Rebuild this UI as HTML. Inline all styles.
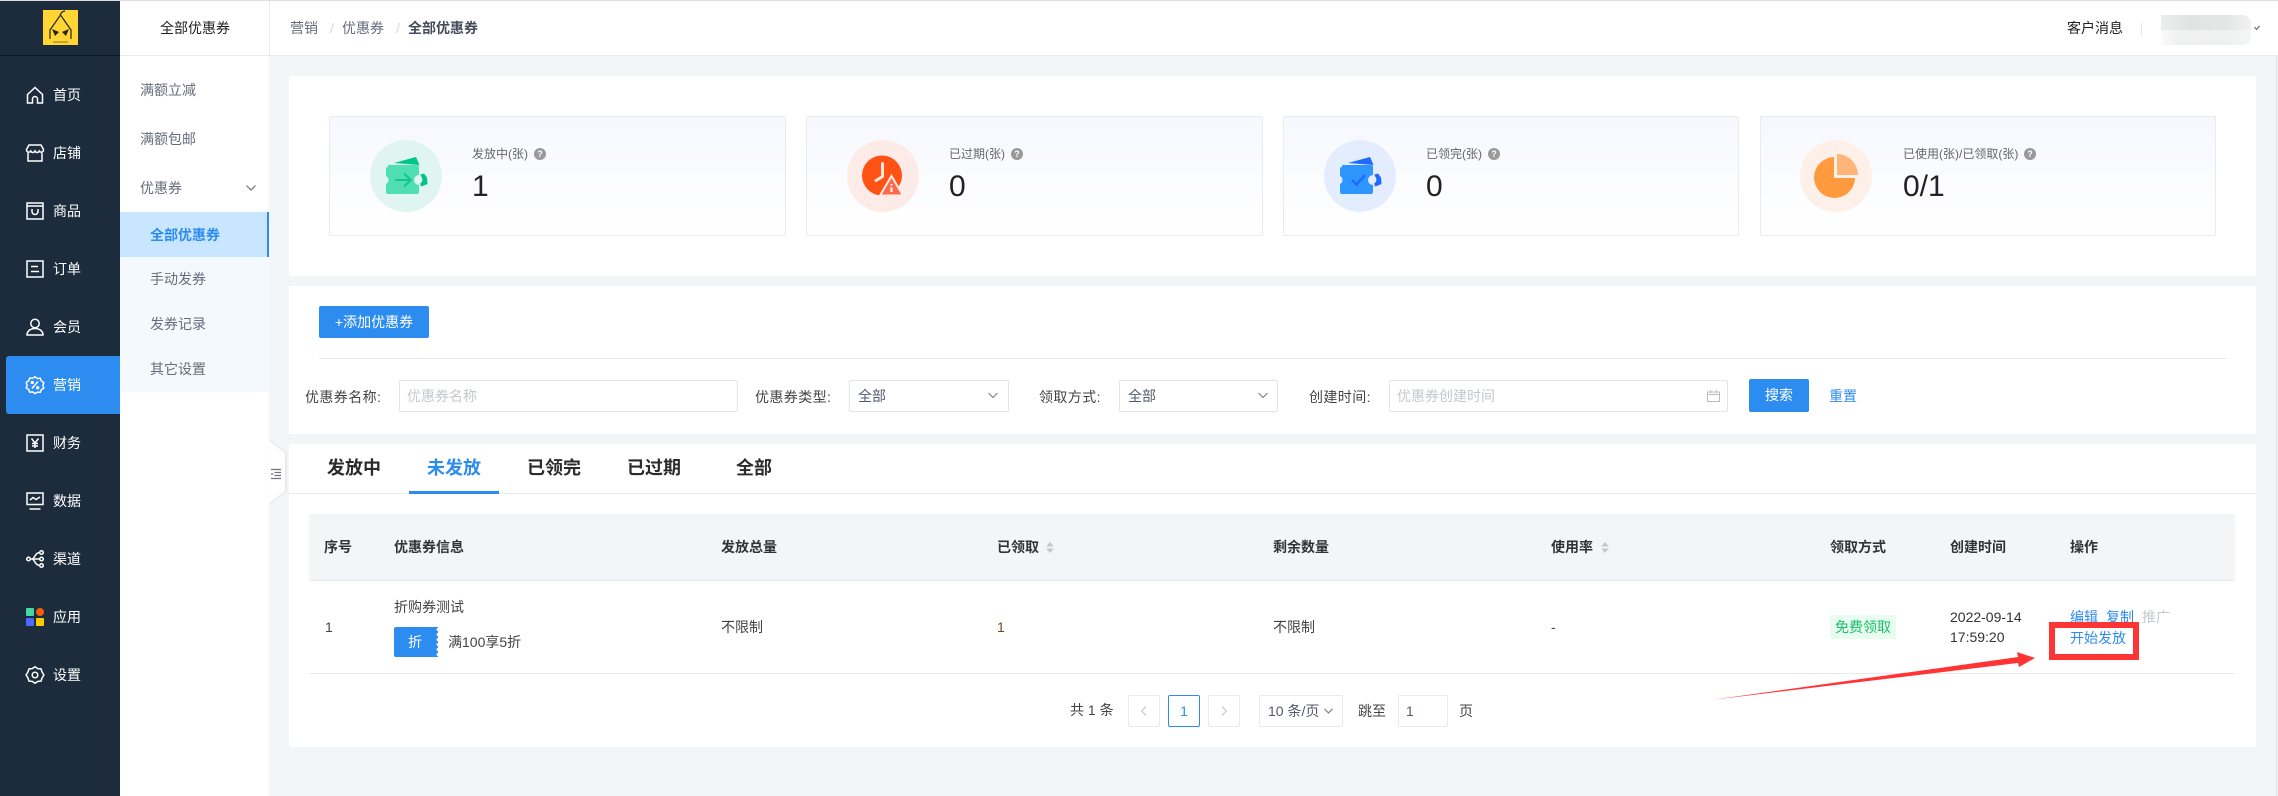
<!DOCTYPE html>
<html lang="zh"><head><meta charset="utf-8"><title>全部优惠券</title>
<style>
*{box-sizing:border-box}
html,body{margin:0;padding:0}
body{width:2278px;height:796px;position:relative;overflow:hidden;background:#f4f5f7;font-family:"Liberation Sans","Noto Sans CJK SC",sans-serif;font-size:14px;color:#444}
.a{position:absolute}
.t{position:absolute;white-space:nowrap;line-height:20px;height:20px}
.m{color:#fff;left:53px}
.s{color:#666d7c;left:140px}
.s2{color:#666d7c;left:150px}
.card{position:absolute;top:116px;width:457px;height:120px;border:1px solid #e9ebf0;border-radius:2px;background:linear-gradient(#f7f8fe,#fff)}
.cir{position:absolute;top:140px;width:72px;height:72px;border-radius:50%}
.lab{font-size:12px;color:#666;top:144px}
.num{font-size:30px;color:#222;line-height:36px;height:36px;top:169px}
.q{position:absolute;top:148px;width:12px;height:12px;border-radius:50%;background:#999;color:#fff;font-size:9px;line-height:12px;text-align:center;font-weight:bold}
.inp{position:absolute;top:380px;height:32px;background:#fff;border:1px solid #e3e5ea;border-radius:2px}
.ph{color:#c5c8ce}
.f{color:#444;letter-spacing:.4px}
.tab{font-size:18px;font-weight:bold;color:#2b2b2b;top:458px}
.th{font-weight:bold;color:#333;top:537px}
.td{color:#444;top:617px}
.pg{position:absolute;top:695px;height:32px;background:#fff;border:1px solid #e8eaec;border-radius:2px}
svg{position:absolute;overflow:visible}
.ic{left:26px;width:18px;height:18px;fill:none;stroke:#fff;stroke-width:1.5}
</style></head><body>

<div class="a" style="left:0;top:0;width:2278px;height:1px;background:#ddd"></div>

<!-- dark sidebar -->
<div class="a" style="left:0;top:1px;width:120px;height:795px;background:#1d2c3d"></div>
<div class="a" style="left:0;top:55px;width:120px;height:1px;background:#0e1722"></div>
<div class="a" style="left:6px;top:356px;width:114px;height:58px;background:#2d8cf0;border-radius:3px 0 0 3px"></div>

<!-- logo -->
<svg style="left:43px;top:10px" width="35" height="35" viewBox="0 0 35 35">
<rect width="35" height="35" fill="#ffd633"/>
<path d="M17.500 5 7 20v9M17.500 5 28 20v9M17 5l2-3 3-1" fill="none" stroke="#2a2416" stroke-width="1.200"/>
<path d="M9 19l7 3-4 4zM26 19l-7 3 4 4z" fill="#2a2416"/>
<path d="M10 32h15" stroke="#8a7420" stroke-width="1"/>
</svg>

<!-- menu -->
<svg class="ic" style="top:86px" viewBox="0 0 18 18"><path d="M1.500 8.500 9 1.500l7.500 7V17H11.500v-4a2.500 2.500 0 0 0-5 0v4H1.500z"/></svg>
<div class="t m" style="top:85px">首页</div>
<svg class="ic" style="top:144px" viewBox="0 0 18 18"><path d="M3 1h12l2.500 4.500c0 3-3 3.500-4.200 1.500-1 2-3.300 2-4.300 0-1 2-3.300 2-4.300 0C3.500 9 .5 8.500.5 5.500zM2 9v8h14V9"/></svg>
<div class="t m" style="top:143px">店铺</div>
<svg class="ic" style="top:202px" viewBox="0 0 18 18"><path d="M1 1h16v16H1zM1 4h16M6 7v2.500a3 3 0 0 0 6 0V7"/></svg>
<div class="t m" style="top:201px">商品</div>
<svg class="ic" style="top:260px" viewBox="0 0 18 18"><path d="M1 1h16v16H1zM5 6.500h7M5 11.500h8"/></svg>
<div class="t m" style="top:259px">订单</div>
<svg class="ic" style="top:318px" viewBox="0 0 18 18"><circle cx="9" cy="5.500" r="4.200"/><path d="M1 17c0-4 3.500-6.500 8-6.500s8 2.500 8 6.500z"/></svg>
<div class="t m" style="top:317px">会员</div>
<svg class="ic" style="top:376px" viewBox="0 0 18 18"><path d="M9 .8l2.400 1.700 2.900-.3 1 2.700 2.500 1.600-.9 2.800.9 2.800-2.500 1.600-1 2.700-2.900-.3L9 17.600l-2.400-1.700-2.900.3-1-2.700-2.500-1.600.9-2.800-.9-2.800 2.500-1.600 1-2.700 2.900.3z" stroke-linejoin="round"/><path d="M6 12.500l6-7"/><circle cx="6.300" cy="6.500" r=".9"/><circle cx="11.700" cy="11.800" r=".9"/></svg>
<div class="t m" style="top:375px">营销</div>
<svg class="ic" style="top:434px" viewBox="0 0 18 18"><path d="M1 1h16v16H1zM5.500 4.500 9 9l3.500-4.500M9 9v5M6 9.500h6M6 12h6"/></svg>
<div class="t m" style="top:433px">财务</div>
<svg class="ic" style="top:492px" viewBox="0 0 18 18"><path d="M1 1h16v11.500H1zM3.500 17h11M4 8l3-2.500 3 2 4-2.500"/></svg>
<div class="t m" style="top:491px">数据</div>
<svg class="ic" style="top:550px" viewBox="0 0 18 18"><circle cx="2.500" cy="9" r="1.800"/><circle cx="15.500" cy="2.500" r="1.800"/><circle cx="15.500" cy="9" r="1.800"/><circle cx="15.500" cy="15.500" r="1.800"/><path d="M4.500 9h9M13.700 2.500C9 3 9.500 7 6.500 9c3 2 2.500 6 7.200 6.500"/></svg>
<div class="t m" style="top:549px">渠道</div>
<svg style="left:26px;top:608px" width="18" height="18" viewBox="0 0 18 18"><rect width="8" height="8" rx="1" fill="#43d9a3"/><circle cx="14" cy="4" r="4" fill="#f95d06"/><rect y="10" width="8" height="8" rx="1" fill="#4b6bff"/><rect x="10" y="10" width="8" height="8" rx="1" fill="#fc0"/></svg>
<div class="t m" style="top:607px">应用</div>
<svg class="ic" style="top:666px" viewBox="0 0 18 18"><path d="M9 .8l2.800 1.800 3.200.3 1 3 1.900 3.100-1.900 3.100-1 3-3.200.3L9 17.300l-2.800-1.900-3.200-.3-1-3L.1 9l1.900-3.100 1-3 3.200-.3z" stroke-linejoin="round"/><circle cx="9" cy="9" r="2.800"/></svg>
<div class="t m" style="top:665px">设置</div>

<!-- secondary sidebar -->
<div class="a" style="left:120px;top:1px;width:149px;height:795px;background:#fff"></div>
<div class="a" style="left:120px;top:55px;width:150px;height:1px;background:#e8eaec"></div>
<div class="a" style="left:269px;top:1px;width:1px;height:54px;background:#e8eaec"></div>
<div class="t" style="left:160px;top:18px;color:#222">全部优惠券</div>
<div class="t s" style="top:80px">满额立减</div>
<div class="t s" style="top:129px">满额包邮</div>
<div class="t s" style="top:178px">优惠券</div>
<svg style="left:246px;top:184px" width="10" height="8"><path d="M.5 1.500 5 6l4.500-4.500" fill="none" stroke="#6b7280" stroke-width="1.200"/></svg>
<div class="a" style="left:120px;top:257px;width:149px;height:135px;background:#f4f9fd"></div>
<div class="a" style="left:120px;top:212px;width:149px;height:45px;background:#c8e6ff;border-right:2px solid #2d8cf0"></div>
<div class="t" style="left:150px;top:225px;color:#2d8cf0;font-weight:bold">全部优惠券</div>
<div class="t s2" style="top:269px">手动发券</div>
<div class="t s2" style="top:314px">发券记录</div>
<div class="t s2" style="top:359px">其它设置</div>

<!-- header -->
<div class="a" style="left:270px;top:1px;width:2008px;height:54px;background:#fff"></div>
<div class="a" style="left:270px;top:55px;width:2008px;height:1px;background:#e8eaec"></div>
<div class="t" style="left:290px;top:18px;color:#666d7c">营销</div>
<div class="t" style="left:330px;top:18px;color:#d5d8de">/</div>
<div class="t" style="left:342px;top:18px;color:#666d7c">优惠券</div>
<div class="t" style="left:396px;top:18px;color:#d5d8de">/</div>
<div class="t" style="left:408px;top:18px;color:#444b5a;font-weight:bold">全部优惠券</div>
<div class="t" style="left:2067px;top:18px;color:#222">客户消息</div>
<div class="a" style="left:2141px;top:23px;width:1px;height:13px;background:#e3e6ea"></div>
<div class="a" style="left:2161px;top:15px;width:90px;height:15px;border-radius:0 8px 0 0;background:linear-gradient(90deg,#eceeee,#e2e4e4 30%,#e4e6e6 70%,#f0f1f1)"></div>
<div class="a" style="left:2161px;top:30px;width:90px;height:15px;border-radius:0 0 8px 0;background:linear-gradient(90deg,#fafafa,#f0f1f1 20%,#eff0f0 70%,#f5f6f6)"></div>
<svg style="left:2254px;top:25px" width="6" height="6"><path d="M.5 2 2.500 4.500 5.500 1" fill="none" stroke="#555" stroke-width="1"/></svg>

<div class="a" style="left:2276px;top:56px;width:1px;height:740px;background:#dde1e6"></div>

<!-- panel 1 -->
<div class="a" style="left:289px;top:76px;width:1967px;height:200px;background:#fff"></div>
<div class="card" style="left:329px"></div>
<div class="card" style="left:806px"></div>
<div class="card" style="left:1283px;width:456px"></div>
<div class="card" style="left:1760px;width:456px"></div>

<div class="cir" style="left:370px;background:#e0f5f0"></div>
<svg style="left:386px;top:157px" width="42" height="38" viewBox="0 0 42 38">
<path d="M8 6 30 0l3.500 8z" fill="#00c489"/>
<path d="M34.500 17.500l3.500-1 3 4 .5 6.500-6 2.500c-1.500-1-.5-2.500-1.500-3 2-1 3-3 2-5.500-.5-1.500-1.500-2-1.500-3.500z" fill="#00c489"/>
<path d="M2 8h29a2 2 0 0 1 2 2v8a5 5 0 0 0 0 10v7a2 2 0 0 1-2 2H2a2 2 0 0 1-2-2v-8a4.450 4.450 0 0 0 0-8v-7a2 2 0 0 1 2-2z" fill="#4fdfb0"/>
<path d="M9 23h15M18 16.500l7 6.500-7 6.500" fill="none" stroke="#16c68f" stroke-width="2"/>
</svg>
<div class="t lab" style="left:472px">发放中(张)</div><div class="q" style="left:534px">?</div>
<div class="t num" style="left:472px">1</div>

<div class="cir" style="left:847px;background:#fcebe7"></div>
<svg style="left:860px;top:154px" width="44" height="44" viewBox="0 0 44 44">
<circle cx="22" cy="21.500" r="20" fill="#ff5214"/>
<path d="M22.500 9.500V22.500L16 26.500" fill="none" stroke="#ffe6dc" stroke-width="3" stroke-linecap="round"/>
<path d="M20 41.500 31.500 22 43 41.500z" fill="#ff6a4a" stroke="#fcebe7" stroke-width="2"/>
<path d="M31.500 30v1.500M31.500 33.500V38" stroke="#fff" stroke-width="2"/>
</svg>
<div class="t lab" style="left:949px">已过期(张)</div><div class="q" style="left:1011px">?</div>
<div class="t num" style="left:949px">0</div>

<div class="cir" style="left:1324px;background:#e4edfd"></div>
<svg style="left:1340px;top:157px" width="42" height="38" viewBox="0 0 42 38">
<path d="M8 6 30 0l3.500 8z" fill="#1f6bff"/>
<path d="M34.500 17.500l3.500-1 3 4 .5 6.500-6 2.500c-1.500-1-.5-2.500-1.500-3 2-1 3-3 2-5.500-.5-1.500-1.500-2-1.500-3.500z" fill="#1f6bff"/>
<path d="M2 8h29a2 2 0 0 1 2 2v8a5 5 0 0 0 0 10v7a2 2 0 0 1-2 2H2a2 2 0 0 1-2-2v-8a4.450 4.450 0 0 0 0-8v-7a2 2 0 0 1 2-2z" fill="#2e96ff"/>
<path d="M12 23l4.500 4.500L25 18" fill="none" stroke="#1f6bff" stroke-width="2.600"/>
</svg>
<div class="t lab" style="left:1426px">已领完(张)</div><div class="q" style="left:1488px">?</div>
<div class="t num" style="left:1426px">0</div>

<div class="cir" style="left:1800px;background:#fdf0e8"></div>
<svg style="left:1800px;top:140px" width="72" height="72" viewBox="1800 140 72 72">
<path d="M1834 157A20.500 20.500 0 1 0 1855 178H1834z" fill="#ff9a3e"/>
<path d="M1837 154A21 21 0 0 1 1858 175H1837z" fill="#ffb578"/>
</svg>
<div class="t lab" style="left:1903px">已使用(张)/已领取(张)</div><div class="q" style="left:2024px">?</div>
<div class="t num" style="left:1903px">0/1</div>

<!-- panel 2 -->
<div class="a" style="left:289px;top:286px;width:1967px;height:148px;background:#fff"></div>
<div class="a" style="left:319px;top:306px;width:110px;height:32px;background:#2d8cf0;border-radius:2px;color:#fff;text-align:center;line-height:32px">+添加优惠券</div>
<div class="a" style="left:319px;top:358px;width:1908px;height:1px;background:#e8eaec"></div>

<div class="t f" style="left:305px;top:387px">优惠券名称:</div>
<div class="inp" style="left:399px;width:339px"></div>
<div class="t ph" style="left:407px;top:386px">优惠券名称</div>
<div class="t f" style="left:755px;top:387px">优惠券类型:</div>
<div class="inp" style="left:849px;width:160px"></div>
<div class="t" style="left:858px;top:386px;color:#515a6e">全部</div>
<svg style="left:988px;top:392px" width="10" height="7"><path d="M.5 1 5 5.500 9.500 1" fill="none" stroke="#808695" stroke-width="1.200"/></svg>
<div class="t f" style="left:1039px;top:387px">领取方式:</div>
<div class="inp" style="left:1119px;width:159px"></div>
<div class="t" style="left:1128px;top:386px;color:#515a6e">全部</div>
<svg style="left:1258px;top:392px" width="10" height="7"><path d="M.5 1 5 5.500 9.500 1" fill="none" stroke="#808695" stroke-width="1.200"/></svg>
<div class="t f" style="left:1309px;top:387px">创建时间:</div>
<div class="inp" style="left:1389px;width:339px"></div>
<div class="t ph" style="left:1397px;top:386px">优惠券创建时间</div>
<svg style="left:1707px;top:390px" width="13" height="12"><path d="M.5 2h12v9.500H.5zM.5 4.500h12M3.500 0v3M9.500 0v3" fill="none" stroke="#b8bcc4" stroke-width="1"/></svg>
<div class="a" style="left:1749px;top:379px;width:60px;height:33px;background:#2d8cf0;border-radius:2px;color:#fff;text-align:center;line-height:33px">搜索</div>
<div class="t" style="left:1829px;top:386px;color:#2d8cf0">重置</div>

<!-- panel 3 -->
<div class="a" style="left:289px;top:444px;width:1967px;height:303px;background:#fff"></div>
<div class="a" style="left:289px;top:493px;width:1967px;height:1px;background:#e8eaec"></div>
<div class="t tab" style="left:327px">发放中</div>
<div class="t tab" style="left:427px;color:#2d8cf0">未发放</div>
<div class="a" style="left:409px;top:491px;width:90px;height:3px;background:#2d8cf0"></div>
<div class="t tab" style="left:527px">已领完</div>
<div class="t tab" style="left:627px">已过期</div>
<div class="t tab" style="left:736px">全部</div>

<!-- collapse tab -->
<svg style="left:269px;top:441px;filter:drop-shadow(1px 0 1px rgba(0,0,0,.08))" width="17" height="62"><path d="M0 0 16 12V50L0 62z" fill="#fff"/></svg>
<svg style="left:271px;top:469px" width="10" height="10"><path d="M0 .5h10M3.500 3.500h6.500M3.500 6.500h6.500M0 9.500h10M0 5h2.500" stroke="#6f7580" stroke-width="1.300" fill="none"/></svg>

<!-- table -->
<div class="a" style="left:309px;top:514px;width:1926px;height:67px;background:#f4f5f7;border-bottom:1px solid #e8eaec"></div>
<div class="t th" style="left:324px">序号</div>
<div class="t th" style="left:394px">优惠券信息</div>
<div class="t th" style="left:721px">发放总量</div>
<div class="t th" style="left:997px">已领取</div>
<svg style="left:1046px;top:542px" width="8" height="11"><path d="M4 0l4 4.500H0zM4 11l4-4.500H0z" fill="#c5c8ce"/></svg>
<div class="t th" style="left:1273px">剩余数量</div>
<div class="t th" style="left:1551px">使用率</div>
<svg style="left:1601px;top:542px" width="8" height="11"><path d="M4 0l4 4.500H0zM4 11l4-4.500H0z" fill="#c5c8ce"/></svg>
<div class="t th" style="left:1830px">领取方式</div>
<div class="t th" style="left:1950px">创建时间</div>
<div class="t th" style="left:2070px">操作</div>

<div class="a" style="left:309px;top:673px;width:1926px;height:1px;background:#e8eaec"></div>
<div class="t td" style="left:325px">1</div>
<div class="t" style="left:394px;top:597px;color:#444">折购券测试</div>
<svg style="left:394px;top:627px" width="44" height="30"><path d="M2 0H44V30H2a2 2 0 0 1-2-2V2a2 2 0 0 1 2-2z" fill="#2d8cf0"/><g fill="#fff"><circle cx="44" cy="2.500" r="1.500"/><circle cx="44" cy="7.500" r="1.500"/><circle cx="44" cy="12.500" r="1.500"/><circle cx="44" cy="17.500" r="1.500"/><circle cx="44" cy="22.500" r="1.500"/><circle cx="44" cy="27.500" r="1.500"/></g></svg>
<div class="t" style="left:408px;top:632px;color:#fff">折</div>
<div class="t" style="left:448px;top:632px;color:#444">满100享5折</div>
<div class="t td" style="left:721px">不限制</div>
<div class="t td" style="left:997px;color:#6b4a1f">1</div>
<div class="t td" style="left:1273px">不限制</div>
<div class="t td" style="left:1551px">-</div>
<div class="a" style="left:1830px;top:615px;width:66px;height:24px;background:#e8fdf0;color:#19be6b;text-align:center;line-height:24px">免费领取</div>
<div class="t" style="left:1950px;top:607px;color:#333">2022-09-14</div>
<div class="t" style="left:1950px;top:627px;color:#333">17:59:20</div>
<div class="t" style="left:2070px;top:607px;color:#2d8cf0">编辑</div>
<div class="t" style="left:2106px;top:607px;color:#2d8cf0">复制</div>
<div class="t" style="left:2142px;top:607px;color:#c5c8ce">推广</div>
<div class="t" style="left:2070px;top:628px;color:#2d8cf0">开始发放</div>

<!-- annotation -->
<div class="a" style="left:2049px;top:622px;width:90px;height:38px;border:6.500px solid #ff3535"></div>
<svg style="left:0;top:0" width="2278" height="796"><path d="M1711 700 2018 657 2017 652 2035 658 2019 667 2018 663z" fill="#ff3535"/></svg>

<!-- pagination -->
<div class="t" style="left:1070px;top:700px;color:#444">共 1 条</div>
<div class="pg" style="left:1128px;width:32px"></div>
<svg style="left:1141px;top:706px" width="6" height="10"><path d="M5 .5.800 5 5 9.500" fill="none" stroke="#c5c8ce" stroke-width="1.200"/></svg>
<div class="pg" style="left:1168px;width:32px;border-color:#2d8cf0;color:#2d8cf0;text-align:center;line-height:30px">1</div>
<div class="pg" style="left:1208px;width:32px"></div>
<svg style="left:1221px;top:706px" width="6" height="10"><path d="M1 .5 5.200 5 1 9.500" fill="none" stroke="#c5c8ce" stroke-width="1.200"/></svg>
<div class="pg" style="left:1259px;width:84px"></div>
<div class="t" style="left:1268px;top:701px;color:#515a6e">10 条/页</div>
<svg style="left:1324px;top:708px" width="9" height="6"><path d="M.5.800 4.500 5 8.500.8" fill="none" stroke="#808695" stroke-width="1.200"/></svg>
<div class="t" style="left:1358px;top:701px;color:#444">跳至</div>
<div class="pg" style="left:1398px;width:50px"></div>
<div class="t" style="left:1406px;top:701px;color:#515a6e">1</div>
<div class="t" style="left:1459px;top:701px;color:#444">页</div>

</body></html>
